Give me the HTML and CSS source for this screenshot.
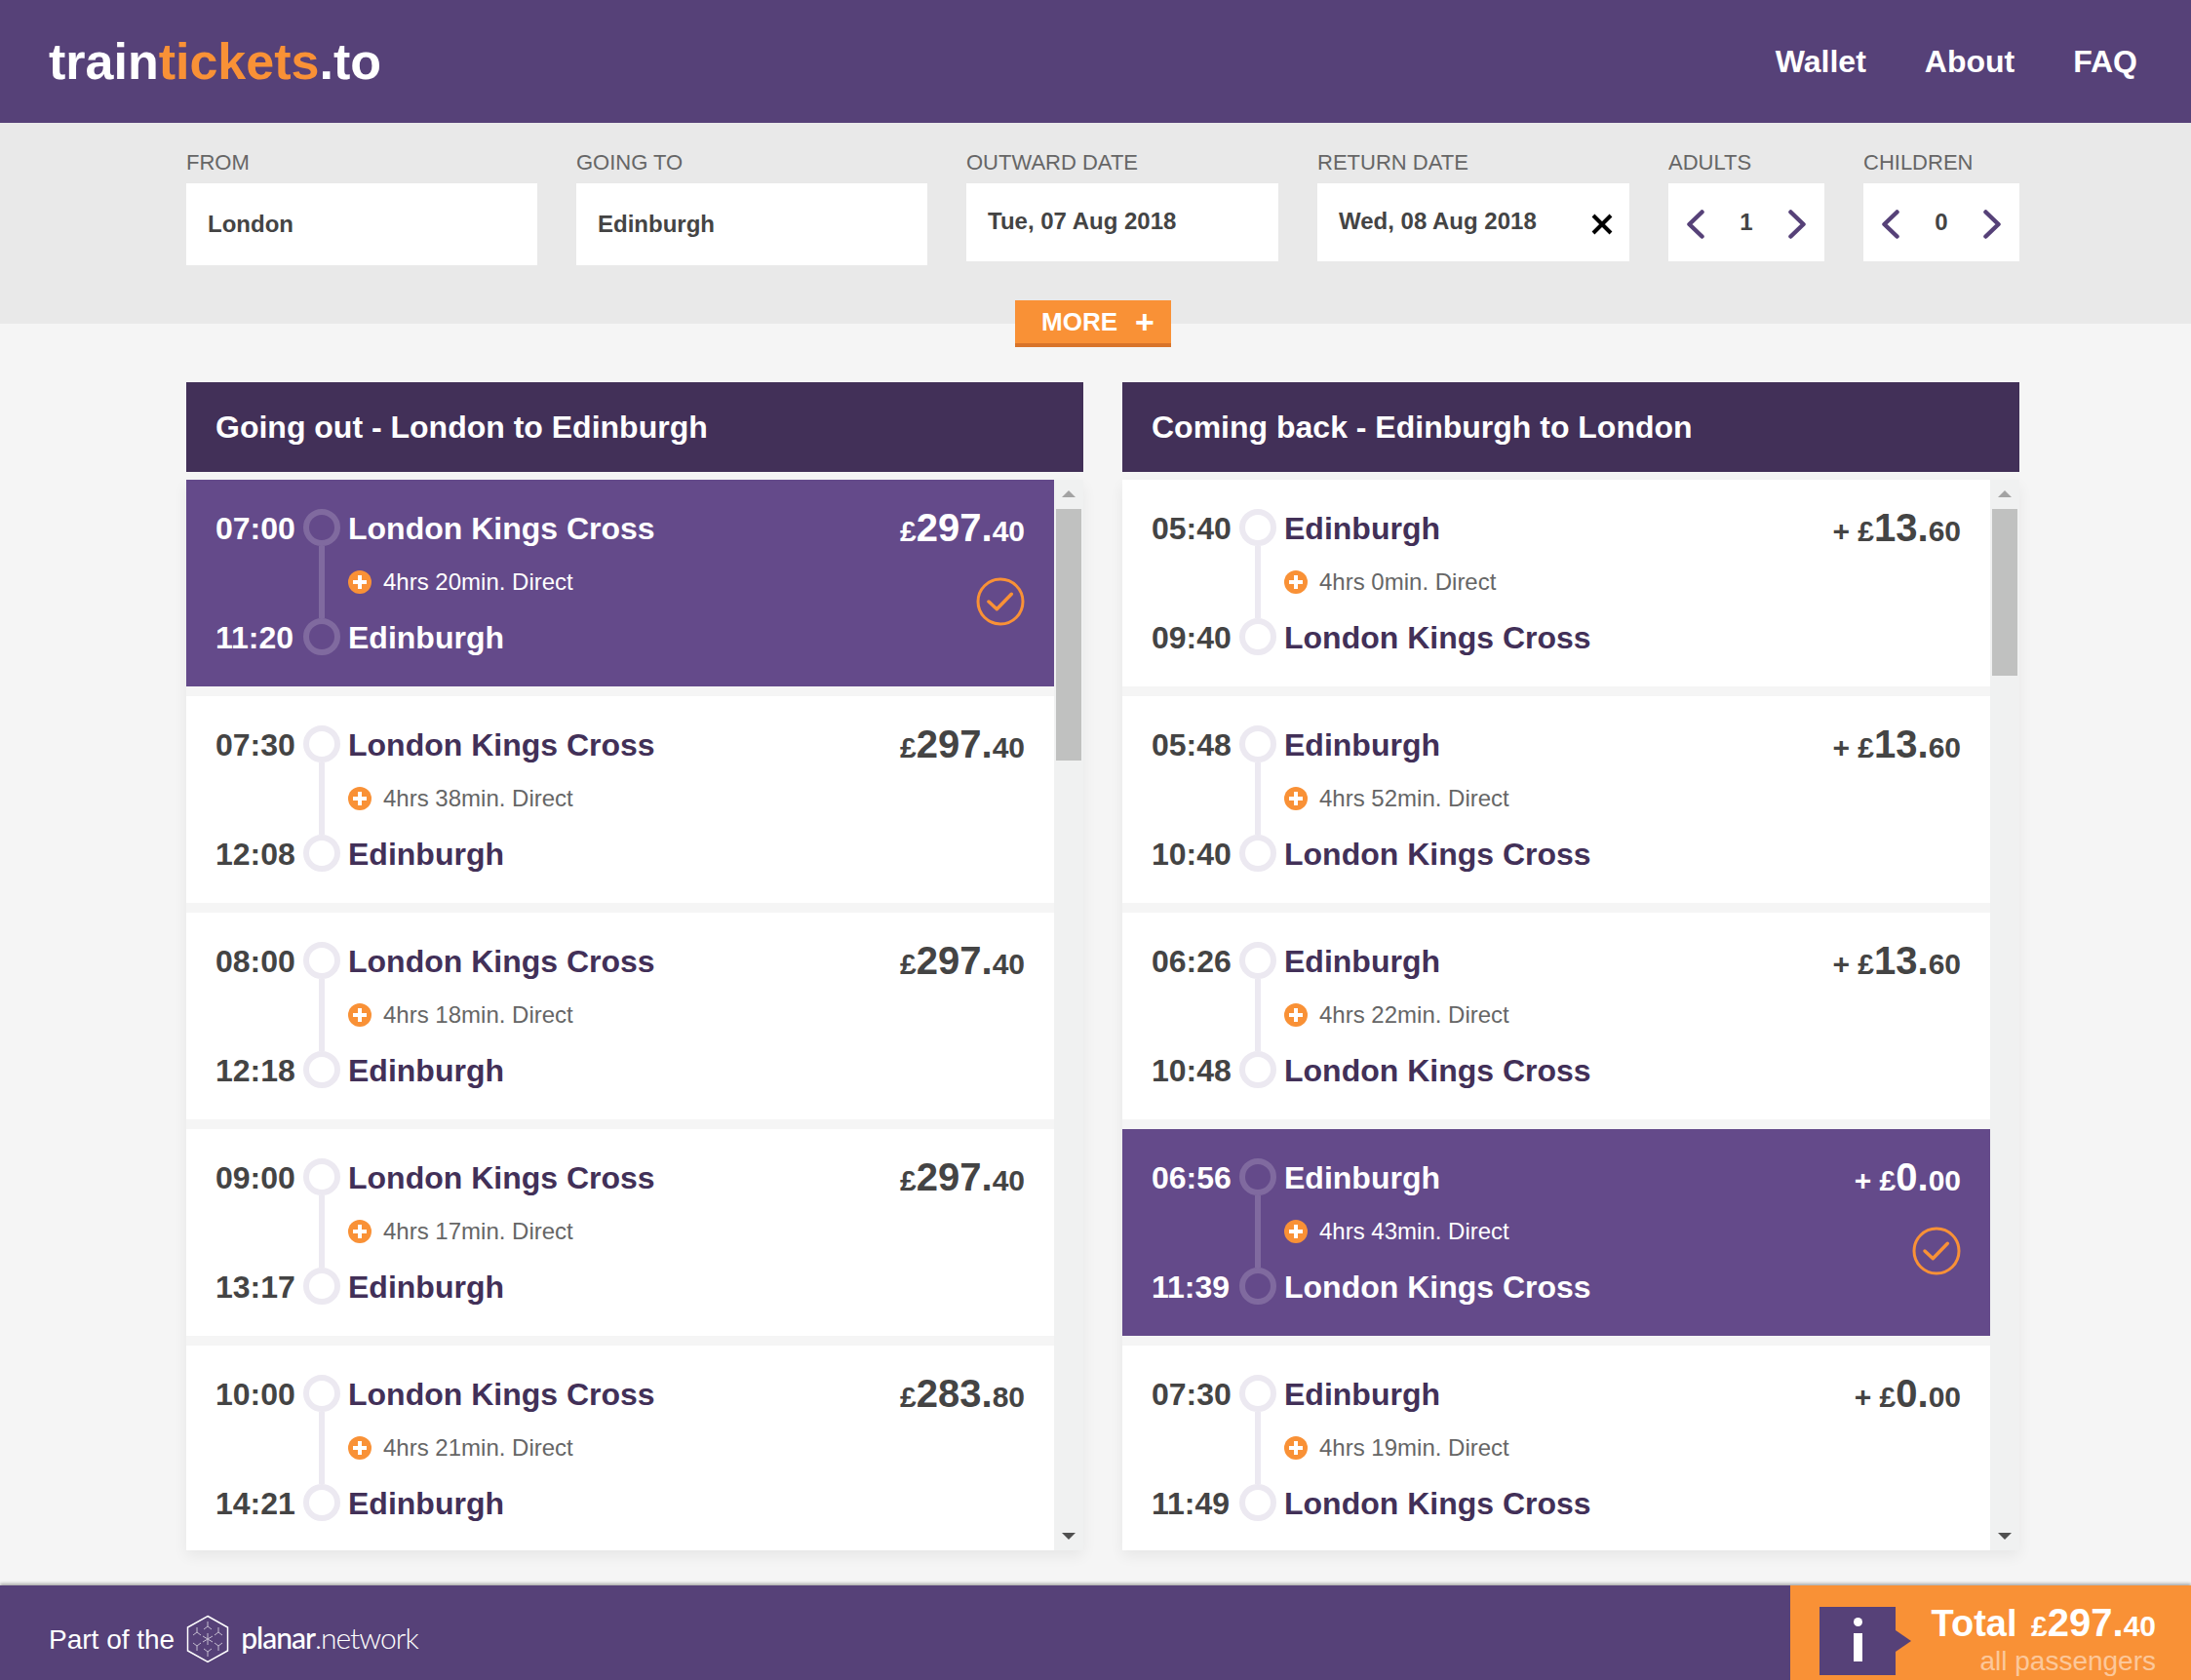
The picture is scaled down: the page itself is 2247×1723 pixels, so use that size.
FILE: index.html
```html
<!DOCTYPE html>
<html lang="en">
<head>
    <meta charset="UTF-8">
    <title>traintickets.to</title>
    <link rel="stylesheet" href="styles.css">
</head>
<body>
    <svg class="icon-defs" width="0" height="0">
        <symbol id="plus-dot" viewBox="0 0 24 24">
            <circle cx="12" cy="12" r="12" fill="#f99136"/>
            <path d="M12 5v14M5 12h14" stroke="#fff" stroke-width="4"/>
        </symbol>
        <symbol id="tick" viewBox="0 0 50 50">
            <circle cx="25" cy="25" r="23" fill="none" stroke="#f99136" stroke-width="3"/>
            <path d="M13 25l8.300 7.700L36.300 17.300" fill="none" stroke="#f99136" stroke-width="3.500" stroke-linecap="round" stroke-linejoin="round"/>
        </symbol>
        <symbol id="chev-left" viewBox="0 0 18 30">
            <path d="M15.500 2.500L2.500 15l13 12.500" fill="none" stroke="#564178" stroke-width="4.500" stroke-linecap="round" stroke-linejoin="round"/>
        </symbol>
        <symbol id="chev-right" viewBox="0 0 18 30">
            <path d="M2.500 2.500L15.500 15l-13 12.500" fill="none" stroke="#564178" stroke-width="4.500" stroke-linecap="round" stroke-linejoin="round"/>
        </symbol>
    </svg>

    <header class="topbar">
        <div class="logo">train<span class="logo-mid">tickets</span>.to</div>
        <nav class="nav">
            <a href="#">Wallet</a>
            <a href="#">About</a>
            <a href="#">FAQ</a>
        </nav>
    </header>

    <section class="search">
        <div class="search-inner">
            <div class="fields">
                <div class="field w-360">
                    <label>FROM</label>
                    <div class="box box-tall">London</div>
                </div>
                <div class="field w-360">
                    <label>GOING TO</label>
                    <div class="box box-tall">Edinburgh</div>
                </div>
                <div class="field w-320">
                    <label>OUTWARD DATE</label>
                    <div class="box">Tue, 07 Aug 2018</div>
                </div>
                <div class="field w-320">
                    <label>RETURN DATE</label>
                    <div class="box box-clear">Wed, 08 Aug 2018
                        <svg class="clear" width="24" height="24" viewBox="0 0 24 24"><path d="M3 3l18 18M21 3L3 21" stroke="#000" stroke-width="4"/></svg>
                    </div>
                </div>
                <div class="field w-160">
                    <label>ADULTS</label>
                    <div class="box stepper">
                        <svg class="chev" width="18" height="30"><use href="#chev-left"/></svg>
                        <span>1</span>
                        <svg class="chev" width="18" height="30"><use href="#chev-right"/></svg>
                    </div>
                </div>
                <div class="field w-160">
                    <label>CHILDREN</label>
                    <div class="box stepper">
                        <svg class="chev" width="18" height="30"><use href="#chev-left"/></svg>
                        <span>0</span>
                        <svg class="chev" width="18" height="30"><use href="#chev-right"/></svg>
                    </div>
                </div>
            </div>
            <button class="more">MORE <span class="more-plus">+</span></button>
        </div>
    </section>

    <main class="results">
        <section class="column">
            <h2 class="column-title">Going out - London to Edinburgh</h2>
            <div class="list-wrap">
                <div class="list">
                    <article class="trip selected">
                        <div class="route">
                            <span class="time">07:00</span><span class="ring"></span><span class="station">London Kings Cross</span>
                            <span class="line"></span>
                            <span class="duration"><svg width="24" height="24"><use href="#plus-dot"/></svg>4hrs 20min. Direct</span>
                            <span class="time">11:20</span><span class="ring"></span><span class="station">Edinburgh</span>
                        </div>
                        <div class="fare">
                            <div class="price"><small>£</small>297.<small>40</small></div>
                            <svg class="tick" width="50" height="50"><use href="#tick"/></svg>
                        </div>
                    </article>
                    <article class="trip">
                        <div class="route">
                            <span class="time">07:30</span><span class="ring"></span><span class="station">London Kings Cross</span>
                            <span class="line"></span>
                            <span class="duration"><svg width="24" height="24"><use href="#plus-dot"/></svg>4hrs 38min. Direct</span>
                            <span class="time">12:08</span><span class="ring"></span><span class="station">Edinburgh</span>
                        </div>
                        <div class="fare">
                            <div class="price"><small>£</small>297.<small>40</small></div>
                        </div>
                    </article>
                    <article class="trip">
                        <div class="route">
                            <span class="time">08:00</span><span class="ring"></span><span class="station">London Kings Cross</span>
                            <span class="line"></span>
                            <span class="duration"><svg width="24" height="24"><use href="#plus-dot"/></svg>4hrs 18min. Direct</span>
                            <span class="time">12:18</span><span class="ring"></span><span class="station">Edinburgh</span>
                        </div>
                        <div class="fare">
                            <div class="price"><small>£</small>297.<small>40</small></div>
                        </div>
                    </article>
                    <article class="trip">
                        <div class="route">
                            <span class="time">09:00</span><span class="ring"></span><span class="station">London Kings Cross</span>
                            <span class="line"></span>
                            <span class="duration"><svg width="24" height="24"><use href="#plus-dot"/></svg>4hrs 17min. Direct</span>
                            <span class="time">13:17</span><span class="ring"></span><span class="station">Edinburgh</span>
                        </div>
                        <div class="fare">
                            <div class="price"><small>£</small>297.<small>40</small></div>
                        </div>
                    </article>
                    <article class="trip">
                        <div class="route">
                            <span class="time">10:00</span><span class="ring"></span><span class="station">London Kings Cross</span>
                            <span class="line"></span>
                            <span class="duration"><svg width="24" height="24"><use href="#plus-dot"/></svg>4hrs 21min. Direct</span>
                            <span class="time">14:21</span><span class="ring"></span><span class="station">Edinburgh</span>
                        </div>
                        <div class="fare">
                            <div class="price"><small>£</small>283.<small>80</small></div>
                        </div>
                    </article>
                </div>
                <div class="scrollbar">
                    <span class="arrow-up"></span>
                    <span class="thumb thumb-long"></span>
                    <span class="arrow-down"></span>
                </div>
            </div>
        </section>

        <section class="column">
            <h2 class="column-title">Coming back - Edinburgh to London</h2>
            <div class="list-wrap">
                <div class="list">
                    <article class="trip">
                        <div class="route">
                            <span class="time">05:40</span><span class="ring"></span><span class="station">Edinburgh</span>
                            <span class="line"></span>
                            <span class="duration"><svg width="24" height="24"><use href="#plus-dot"/></svg>4hrs 0min. Direct</span>
                            <span class="time">09:40</span><span class="ring"></span><span class="station">London Kings Cross</span>
                        </div>
                        <div class="fare">
                            <div class="price"><small>+ £</small>13.<small>60</small></div>
                        </div>
                    </article>
                    <article class="trip">
                        <div class="route">
                            <span class="time">05:48</span><span class="ring"></span><span class="station">Edinburgh</span>
                            <span class="line"></span>
                            <span class="duration"><svg width="24" height="24"><use href="#plus-dot"/></svg>4hrs 52min. Direct</span>
                            <span class="time">10:40</span><span class="ring"></span><span class="station">London Kings Cross</span>
                        </div>
                        <div class="fare">
                            <div class="price"><small>+ £</small>13.<small>60</small></div>
                        </div>
                    </article>
                    <article class="trip">
                        <div class="route">
                            <span class="time">06:26</span><span class="ring"></span><span class="station">Edinburgh</span>
                            <span class="line"></span>
                            <span class="duration"><svg width="24" height="24"><use href="#plus-dot"/></svg>4hrs 22min. Direct</span>
                            <span class="time">10:48</span><span class="ring"></span><span class="station">London Kings Cross</span>
                        </div>
                        <div class="fare">
                            <div class="price"><small>+ £</small>13.<small>60</small></div>
                        </div>
                    </article>
                    <article class="trip selected">
                        <div class="route">
                            <span class="time">06:56</span><span class="ring"></span><span class="station">Edinburgh</span>
                            <span class="line"></span>
                            <span class="duration"><svg width="24" height="24"><use href="#plus-dot"/></svg>4hrs 43min. Direct</span>
                            <span class="time">11:39</span><span class="ring"></span><span class="station">London Kings Cross</span>
                        </div>
                        <div class="fare">
                            <div class="price"><small>+ £</small>0.<small>00</small></div>
                            <svg class="tick" width="50" height="50"><use href="#tick"/></svg>
                        </div>
                    </article>
                    <article class="trip">
                        <div class="route">
                            <span class="time">07:30</span><span class="ring"></span><span class="station">Edinburgh</span>
                            <span class="line"></span>
                            <span class="duration"><svg width="24" height="24"><use href="#plus-dot"/></svg>4hrs 19min. Direct</span>
                            <span class="time">11:49</span><span class="ring"></span><span class="station">London Kings Cross</span>
                        </div>
                        <div class="fare">
                            <div class="price"><small>+ £</small>0.<small>00</small></div>
                        </div>
                    </article>
                </div>
                <div class="scrollbar">
                    <span class="arrow-up"></span>
                    <span class="thumb thumb-short"></span>
                    <span class="arrow-down"></span>
                </div>
            </div>
        </section>
    </main>

    <footer class="footer">
        <div class="partner">
            <span>Part of the</span>
            <svg class="hex" width="44" height="50" viewBox="0 0 44 50">
                <path d="M22 1.500L42.500 13v24L22 48.500 1.500 37V13z" fill="none" stroke="#fff" stroke-width="1.500"/>
                <g fill="none" stroke="#fff" stroke-width="1" opacity=".65">
                    <path d="M22 19v12M17 22l10 6M27 22l-10 6"/>
                    <path d="M22 7v5l-4 3M22 12l4 3"/>
                    <path d="M22 43v-5l-4-3M22 38l4-3"/>
                    <path d="M11 13v5l-4 3M11 18l4 3"/>
                    <path d="M33 13v5l-4 3M33 18l4 3"/>
                    <path d="M11 37v-5l-4-3M11 32l4-3"/>
                    <path d="M33 37v-5l-4-3M33 32l4-3"/>
                </g>
            </svg>
            <span class="planar"><b>planar</b>.network</span>
        </div>
        <div class="total">
            <div class="info"><span class="info-dot"></span><span class="info-stem"></span></div>
            <div class="total-text">
                <div class="total-price">Total <span class="total-amount"><small>£</small>297.<small>40</small></span></div>
                <div class="total-note">all passengers</div>
            </div>
        </div>
    </footer>
</body>
</html>
```

FILE: styles.css
```css
* {
    box-sizing: border-box;
}
html, body {
    height: 100%;
}
body {
    margin: 0;
    height: 1723px;
    overflow: hidden;
    display: flex;
    flex-direction: column;
    font-family: "Liberation Sans", Arial, sans-serif;
    background-color: #f5f5f5;
    color: #444;
}
.icon-defs {
    position: absolute;
}

/* Top bar */
.topbar {
    height: 126px;
    flex: none;
    display: flex;
    align-items: center;
    justify-content: space-between;
    padding: 0 55px 0 50px;
    background-color: #564178;
    color: #fff;
}
.logo {
    font-size: 52px;
    font-weight: bold;
    line-height: 1;
}
.logo-mid {
    color: #f99136;
}
.nav {
    display: flex;
    gap: 60px;
}
.nav a {
    color: #fff;
    text-decoration: none;
    font-size: 32px;
    font-weight: bold;
}

/* Search band */
.search {
    height: 206px;
    flex: none;
    background-color: #e9e9e9;
}
.search-inner {
    width: 1880px;
    margin-left: 191px;
    padding-top: 28px;
}
.fields {
    display: flex;
    gap: 40px;
    align-items: flex-start;
    height: 118px;
}
.w-360 { width: 360px; }
.w-320 { width: 320px; }
.w-160 { width: 160px; }
.field label {
    display: block;
    font-size: 22px;
    line-height: 26px;
    margin-bottom: 8px;
    color: #666;
}
.box {
    height: 80px;
    display: flex;
    align-items: center;
    padding: 0 22px;
    background-color: #fff;
    font-size: 24px;
    font-weight: bold;
    color: #444;
    padding-bottom: 2px;
}
.box-tall {
    height: 84px;
    padding-bottom: 0;
}
.box-clear {
    justify-content: space-between;
    padding-right: 16px;
}
.clear {
    margin-top: 6px;
}
.stepper {
    justify-content: space-between;
    padding: 0 19px 0 19px;
}
.chev {
    margin-top: 4px;
}
.more {
    display: flex;
    align-items: center;
    justify-content: center;
    width: 160px;
    height: 48px;
    margin: 36px 0 0 850px;
    padding: 0 0 0 10px;
    border: none;
    border-bottom: 4px solid #d8742a;
    background-color: #f99136;
    color: #fff;
    font-family: inherit;
    font-size: 26px;
    font-weight: bold;
}
.more-plus {
    margin-left: 18px;
    font-size: 34px;
    line-height: 30px;
}

/* Result columns */
.results {
    flex: 1;
    min-height: 0;
    display: flex;
    gap: 40px;
    width: 1880px;
    margin-left: 191px;
    padding-top: 60px;
}
.column {
    width: 920px;
}
.column-title {
    height: 92px;
    margin: 0 0 8px;
    padding: 0 30px;
    line-height: 92px;
    font-size: 32px;
    font-weight: bold;
    color: #fff;
    background-color: #423058;
}
.list-wrap {
    display: flex;
    height: 1098px;
    box-shadow: 0 6px 14px rgba(0, 0, 0, 0.06);
}
.list {
    width: 890px;
    overflow: hidden;
}
.trip {
    height: 212px;
    margin-bottom: 10px;
    padding: 30px 30px 0;
    display: flex;
    justify-content: space-between;
    background-color: #fff;
}
.route {
    display: grid;
    grid-template-columns: 90px 38px auto;
    grid-template-rows: 38px 74px 38px;
    column-gap: 0;
    align-items: center;
}
.time {
    padding-top: 2px;
    font-size: 32px;
    font-weight: bold;
    color: #444;
}
.ring {
    width: 38px;
    height: 38px;
    border: 6px solid #ece9f1;
    border-radius: 50%;
}
.station {
    margin-left: 8px;
    padding-top: 2px;
    font-size: 32px;
    font-weight: bold;
    color: #423058;
}
.line {
    grid-column: 2;
    justify-self: center;
    width: 6px;
    height: 100%;
    background-color: #ece9f1;
}
.duration {
    grid-column: 3;
    margin-left: 8px;
    display: flex;
    align-items: center;
    gap: 12px;
    font-size: 24px;
    color: #666;
}
.fare {
    display: flex;
    flex-direction: column;
    align-items: flex-end;
}
.price {
    font-size: 40px;
    font-weight: bold;
    line-height: 38px;
    color: #444;
}
.price small {
    font-size: 30px;
}
.tick {
    margin-top: 28px;
}

/* Selected trip */
.selected {
    background-color: #644a8a;
}
.selected .time,
.selected .station,
.selected .price,
.selected .duration {
    color: #fff;
}
.selected .ring {
    border-color: #806a9f;
}
.selected .line {
    background-color: #806a9f;
}

/* Scrollbar */
.scrollbar {
    width: 30px;
    display: flex;
    flex-direction: column;
    align-items: center;
    padding: 0 2px;
    background-color: #f0f1f1;
}
.thumb {
    width: 26px;
    background-color: #c0c1c0;
}
.thumb-long {
    height: 258px;
}
.thumb-short {
    height: 171px;
}
.arrow-up {
    width: 0;
    height: 0;
    margin: 11px 0 12px;
    border: 7px solid transparent;
    border-top: none;
    border-bottom: 7px solid #a3a3a3;
}
.arrow-down {
    width: 0;
    height: 0;
    margin-top: auto;
    margin-bottom: 11px;
    border: 7px solid transparent;
    border-bottom: none;
    border-top: 7px solid #505050;
}

/* Footer */
.footer {
    height: 97px;
    flex: none;
    display: flex;
    justify-content: space-between;
    background-color: #564178;
    color: #fff;
    box-shadow: 0 -2px 3px rgba(0, 0, 0, 0.3);
    position: relative;
}
.partner {
    display: flex;
    align-items: center;
    padding: 14px 0 0 50px;
    font-size: 28px;
}
.hex {
    margin-left: 12px;
    margin-bottom: 2px;
}
.planar {
    margin-left: 12px;
    margin-bottom: 6px;
    font-family: Lato, sans-serif;
    font-weight: 300;
    font-size: 30px;
    letter-spacing: -1px;
}
.planar b {
    font-weight: 500;
}
.total {
    width: 411px;
    display: flex;
    padding: 22px 36px 0 30px;
    justify-content: space-between;
    background-color: #f99136;
}
.info {
    position: relative;
    width: 78px;
    height: 70px;
    display: flex;
    flex-direction: column;
    align-items: center;
    padding-top: 11px;
    background-color: #564178;
}
.info::after {
    content: "";
    position: absolute;
    left: 78px;
    top: 24px;
    border-left: 16px solid #564178;
    border-top: 11px solid transparent;
    border-bottom: 11px solid transparent;
}
.info-dot {
    width: 9px;
    height: 9px;
    border-radius: 50%;
    background-color: #fff;
}
.info-stem {
    width: 9px;
    height: 29px;
    margin-top: 7px;
    background-color: #fff;
}
.total-text {
    margin-top: -6px;
    text-align: right;
}
.total-price {
    font-size: 38px;
    font-weight: bold;
    line-height: 44px;
    word-spacing: 4px;
}
.total-amount {
    font-size: 40px;
}
.total-amount small {
    font-size: 30px;
}
.total-note {
    margin-top: -1px;
    font-size: 28px;
    line-height: 30px;
    color: rgba(255, 255, 255, 0.5);
}
```
